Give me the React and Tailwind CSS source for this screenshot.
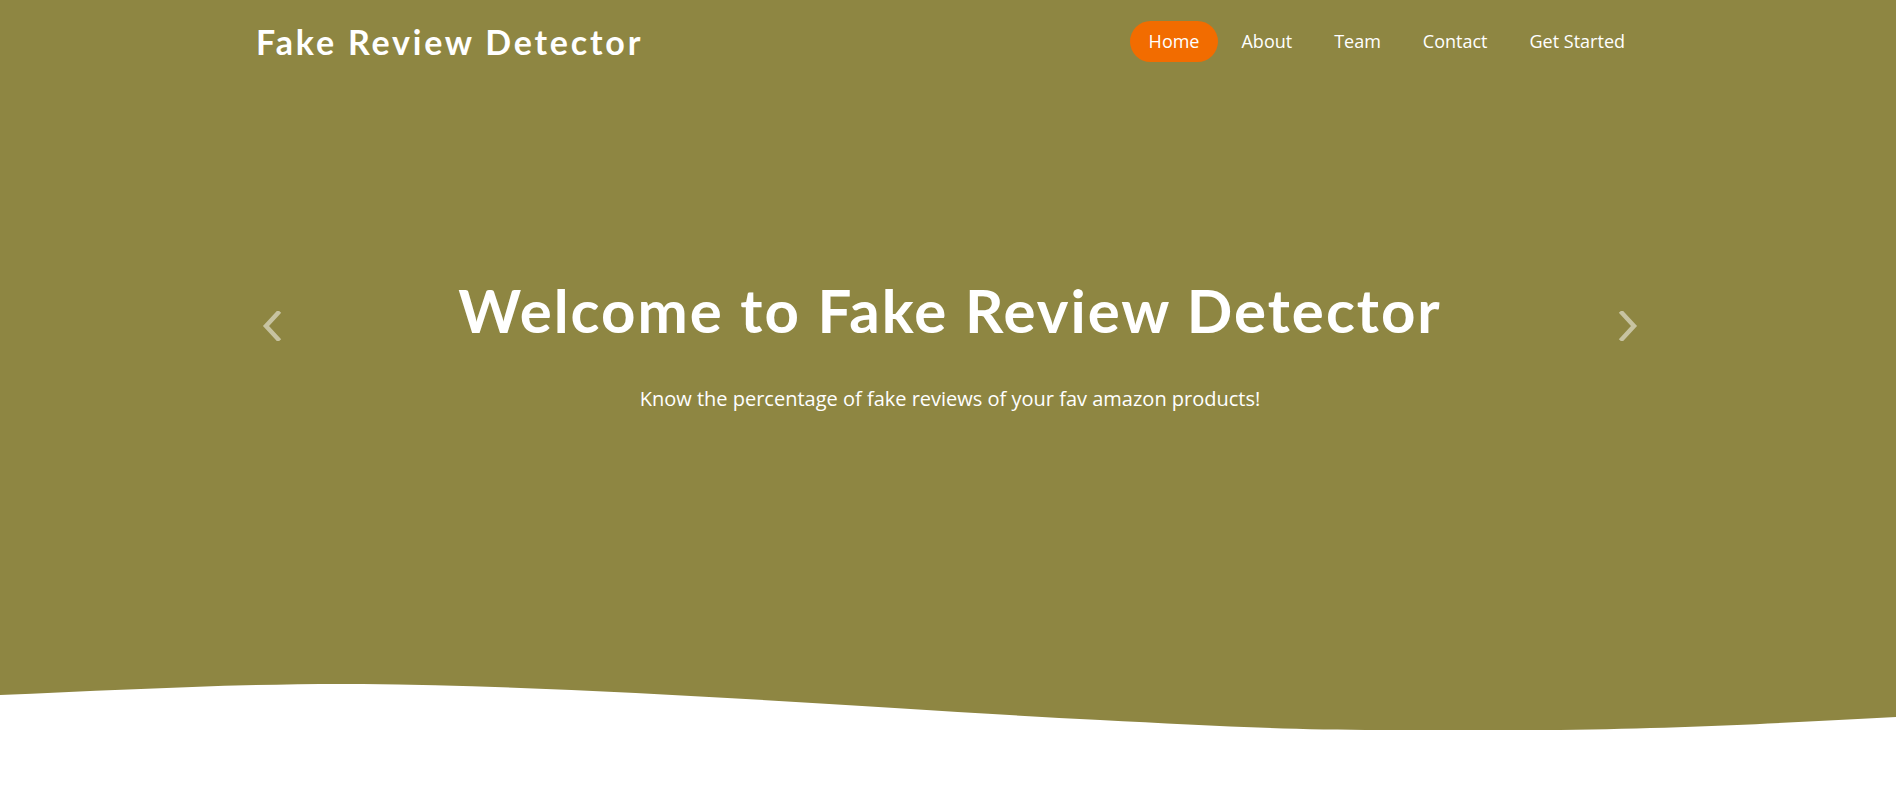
import React from "react";

const links = ["Home", "About", "Team", "Contact", "Get Started"];

const Chevron = ({ dir }) => (
  <svg width="20" height="30" viewBox="0 0 20 30" fill="none">
    <path
      d={dir === "left" ? "M16 2 L4 15 L16 28" : "M4 2 L16 15 L4 28"}
      stroke="white"
      strokeOpacity="0.5"
      strokeWidth="4.5"
      strokeLinecap="square"
    />
  </svg>
);

const App = () => {
  return (
    <div className="min-h-[788px] bg-white" style={{ fontFamily: "'Open Sans', sans-serif" }}>
      <div className="bg-[#8e8642] h-[680px] flex flex-col">
        <header className="h-[85px] flex items-center justify-between pl-[256px] pr-[252px]">
          <h1 className="text-white font-bold text-[34px] leading-[46px] mb-[2px] font-['Lato',sans-serif] tracking-[2.8px]">
            Fake Review Detector
          </h1>
          <nav className="flex items-center gap-[4px] mb-[2px]">
            {links.map((l, i) => (
              <a
                key={l}
                href="#"
                className={`text-white text-[18px] px-[19px] h-[41px] flex items-center rounded-full ${
                  i === 0 ? "bg-[#f26c00]" : ""
                }`}
              >
                {l}
              </a>
            ))}
          </nav>
        </header>
        <section className="flex items-start justify-between pl-[262px] pr-[258px] pt-[189px]">
          <div className="pt-[37px]">
            <Chevron dir="left" />
          </div>
          <div className="flex flex-col items-center">
            <h2 className="text-white font-bold text-[60px] leading-[72px] tracking-[2px] font-['Lato',sans-serif]">
              Welcome to Fake Review Detector
            </h2>
            <p className="text-white text-[20px] leading-[30px] mt-[38px]">
              Know the percentage of fake reviews of your fav amazon products!
            </p>
          </div>
          <div className="pt-[37px]">
            <Chevron dir="right" />
          </div>
        </section>
      </div>
      <svg className="block w-full h-[50px]" viewBox="0 0 1896 50" preserveAspectRatio="none">
        <path
          fill="#8e8642"
          d="M0,0 L1896,0 L1896,37 C1800,42 1700,48 1560,50 L1380,50 C1280,50 1200,45 1100,40 C900,30 600,6 363,4 C250,3 120,10 0,15 Z"
        />
      </svg>
    </div>
  );
};

export default App;
